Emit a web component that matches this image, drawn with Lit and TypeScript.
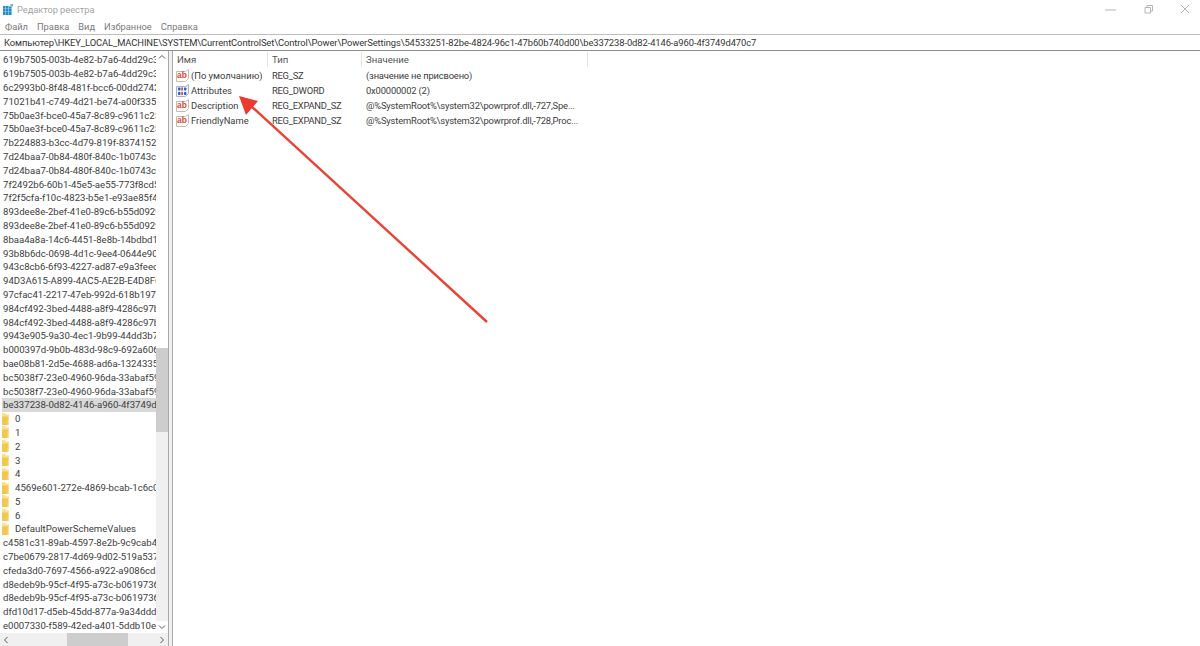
import { LitElement, html, css, svg } from "lit";
import { customElement } from "lit/decorators.js";

type Row = { t: string; folder?: boolean; sel?: boolean };
const keys: Row[] = [
  "619b7505-003b-4e82-b7a6-4dd29c300971","619b7505-003b-4e82-b7a6-4dd29c300972","6c2993b0-8f48-481f-bcc6-00dd27420000","71021b41-c749-4d21-be74-a00f335d582b",
  "75b0ae3f-bce0-45a7-8c89-c9611c25e100","75b0ae3f-bce0-45a7-8c89-c9611c25e101","7b224883-b3cc-4d79-819f-8374152cbe7c","7d24baa7-0b84-480f-840c-1b0743c00f5f",
  "7d24baa7-0b84-480f-840c-1b0743c00f60","7f2492b6-60b1-45e5-ae55-773f8cd5caec","7f2f5cfa-f10c-4823-b5e1-e93ae85f46b5","893dee8e-2bef-41e0-89c6-b55d0929964c",
  "893dee8e-2bef-41e0-89c6-b55d0929964d","8baa4a8a-14c6-4451-8e8b-14bdbd197537","93b8b6dc-0698-4d1c-9ee4-0644e900c85d","943c8cb6-6f93-4227-ad87-e9a3feec08d1",
  "94D3A615-A899-4AC5-AE2B-E4D8F634367F","97cfac41-2217-47eb-992d-618b1977c907","984cf492-3bed-4488-a8f9-4286c97bf5aa","984cf492-3bed-4488-a8f9-4286c97bf5ab",
  "9943e905-9a30-4ec1-9b99-44dd3b76f7a2","b000397d-9b0b-483d-98c9-692a6060cfbf","bae08b81-2d5e-4688-ad6a-13243356654b","bc5038f7-23e0-4960-96da-33abaf5935ec",
  "bc5038f7-23e0-4960-96da-33abaf5935ed",
].map((t) => ({ t }));
const rows: Row[] = [
  ...keys,
  { t: "be337238-0d82-4146-a960-4f3749d470c7", sel: true },
  ...["0","1","2","3","4","4569e601-272e-4869-bcab-1c6c03d7966f","5","6","DefaultPowerSchemeValues"].map((t) => ({ t, folder: true })),
  ...["c4581c31-89ab-4597-8e2b-9c9cab440e6b","c7be0679-2817-4d69-9d02-519a537ed0c6","cfeda3d0-7697-4566-a922-a9086cd49dfa","d8edeb9b-95cf-4f95-a73c-b061973693c8","d8edeb9b-95cf-4f95-a73c-b061973693c9","dfd10d17-d5eb-45dd-877a-9a34ddd15c82","e0007330-f589-42ed-a401-5ddb10e785d3"].map((t) => ({ t })),
];
const values = [
  { icon: "ab", name: "(По умолчанию)", type: "REG_SZ", value: "(значение не присвоено)" },
  { icon: "bin", name: "Attributes", type: "REG_DWORD", value: "0x00000002 (2)" },
  { icon: "ab", name: "Description", type: "REG_EXPAND_SZ", value: "@%SystemRoot%\\system32\\powrprof.dll,-727,Spe..." },
  { icon: "ab", name: "FriendlyName", type: "REG_EXPAND_SZ", value: "@%SystemRoot%\\system32\\powrprof.dll,-728,Proc..." },
];

const abIcon = html`<svg class="ic" viewBox="0 0 13 13"><path d="M.5 2.5h9l3-2v9l-3 3h-9z" fill="#fff" stroke="#c9b9b4"/><text x="6" y="9" text-anchor="middle" font-size="8.4" font-weight="700" fill="#dc4a32" font-family="Liberation Sans">ab</text></svg>`;
const binIcon = html`<svg class="ic" viewBox="0 0 13 13"><path d="M.5 2.5h9l3-2v9l-3 3h-9z" fill="#eef2fb" stroke="#a8b2cc"/><g fill="#2b5fc9"><rect x="2" y="3.5" width="2.4" height="3" rx=".8"/><rect x="8" y="3.5" width="2.4" height="3" rx=".8"/><rect x="2" y="8" width="2.4" height="3" rx=".8"/><rect x="8" y="8" width="2.4" height="3" rx=".8"/></g><g fill="#d2553f"><rect x="5.2" y="3.5" width="1.8" height="3"/><rect x="5.2" y="8" width="1.8" height="3"/></g></svg>`;
const folder = html`<svg class="fd" viewBox="0 0 7 12"><path d="M0 0h3l1 1.5h3V12H0z" fill="#fbe08a"/><path d="M0 3.5h6L5.5 12H0z" fill="#f3c650"/></svg>`;

@customElement("app-root")
export class AppRoot extends LitElement {
  static styles = css`
    :host { display: flex; flex-direction: column; width: 1200px; height: 646px; position: relative; overflow: hidden; background: #fff; font-family: Roboto, "Open Sans", sans-serif; font-size: 9.6px; color: #3c3c3c; }
    .title { height: 18px; display: flex; align-items: center; flex: none; padding-left: 3px; gap: 4px; color: #a3a3a3; font-size: 9.3px; letter-spacing: -0.05px; }
    .title .name { flex: 1; }
    .logo { width: 10px; height: 11px; }
    .ctl { display: flex; gap: 23px; padding-right: 7px; }
    .ctl svg { width: 14px; height: 14px; display: block; }
    .menu { height: 16px; display: flex; align-items: center; gap: 9px; flex: none; padding-left: 5px; color: #7a7a7a; font-size: 9.3px; }
    .addr { height: 15px; flex: none; display: flex; align-items: center; padding-left: 4px; border-top: 1px solid #bdbdbd; border-bottom: 1px solid #8e8e8e; color: #333; font-size: 9.4px; letter-spacing: -0.09px; white-space: nowrap; }
    .body { flex: 1; display: flex; min-height: 0; }
    .left { width: 168px; flex: none; display: flex; flex-direction: column; }
    .left-main { flex: 1; display: flex; min-height: 0; }
    .tree { width: 156px; padding: 2px 0 0 2px; overflow: hidden; flex: none; box-sizing: border-box; }
    .row { height: 13.8px; display: flex; align-items: center; white-space: nowrap; overflow: hidden; padding-left: 1px; }
    .row.sel { background: #d9d9d9; }
    .row.folder { padding-left: 0; gap: 6px; }
    .fd { width: 7px; height: 12px; flex: none; }
    .vbar { width: 12px; flex: none; background: #f0f0f0; display: flex; flex-direction: column; }
    .bar-btn { height: 12px; flex: none; background: #fff; display: flex; align-items: center; justify-content: center; }
    .bar-btn svg { width: 8px; height: 8px; }
    .vtrack { flex: 1; display: flex; flex-direction: column; }
    .vspace { height: 285px; flex: none; background: #fff; }
    .vthumb { height: 84px; flex: none; background: #cdcdcd; }
    .hbar { height: 13px; flex: none; display: flex; align-items: center; background: #f0f0f0; }
    .hbtn { width: 12px; height: 13px; display: flex; align-items: center; justify-content: center; flex: none; }
    .hbtn svg { width: 8px; height: 8px; }
    .hspace { width: 55px; flex: none; }
    .hthumb { width: 61px; height: 13px; background: #cdcdcd; flex: none; }
    .hfill { flex: 1; }
    .split { width: 5px; flex: none; background: #f0f0f0; border-left: 1px solid #a8a8a8; border-right: 1px solid #a8a8a8; box-sizing: border-box; }
    .right { flex: 1; min-width: 0; }
    .head { display: grid; grid-template-columns: 95px 94px 226px; height: 16px; align-items: end; color: #555; }
    .head div { height: 15px; padding-left: 4px; line-height: 15px; border-right: 1px solid #e5e5e5; }
    .vals { display: grid; grid-template-columns: 95px 94px 1fr; grid-auto-rows: 15px; padding-top: 1px; font-size: 9.4px; }
    .n { display: flex; align-items: center; gap: 2px; padding-left: 3px; white-space: nowrap; }
    .t, .v { display: flex; align-items: center; padding-left: 4px; white-space: nowrap; }
    .t { letter-spacing: -0.25px; }
    .v { letter-spacing: -0.17px; }
    .ic { width: 13px; height: 13px; flex: none; }
    .arrow { position: absolute; left: 0; top: 0; width: 1200px; height: 646px; pointer-events: none; }
  `;
  render() {
    const up = svg`<path d="M1 5.5l3-3 3 3" fill="none" stroke="#555" stroke-width="1"/>`;
    const down = svg`<path d="M1 2.5l3 3 3-3" fill="none" stroke="#555" stroke-width="1"/>`;
    const l = svg`<path d="M5.5 1l-3 3 3 3" fill="none" stroke="#555" stroke-width="1"/>`;
    const r = svg`<path d="M2.5 1l3 3-3 3" fill="none" stroke="#555" stroke-width="1"/>`;
    return html`
      <div class="title">
        <svg class="logo" viewBox="0 0 10 11"><path d="M0 2h2.6v2.7H0zM3 2h2.6v2.7H3zM6 2.5h2.6v2.2H6zM0 5h2.6v2.7H0zM3 5h2.6v2.7H3zM6 5h2.6v2.7H6zM0 8h2.6v3H0zM3 8h2.6v3H3zM6 8h2.6v3H6z" fill="#1f8fc9"/><path d="M7.4 0H10v2.6H7.4z" fill="#6cb8e0"/></svg>
        <span class="name">Редактор реестра</span>
        <div class="ctl">
          <svg viewBox="0 0 14 14"><path d="M0 8h11" stroke="#b5b5b5"/></svg>
          <svg viewBox="0 0 14 14"><path d="M3 5.5h5.5V11H3zM5 5.5V3.5h5.5V9H8.5" fill="none" stroke="#b5b5b5"/></svg>
          <svg viewBox="0 0 14 14"><path d="M2 3l8 8M10 3l-8 8" stroke="#b5b5b5"/></svg>
        </div>
      </div>
      <div class="menu"><span>Файл</span><span>Правка</span><span>Вид</span><span>Избранное</span><span>Справка</span></div>
      <div class="addr">Компьютер\\HKEY_LOCAL_MACHINE\\SYSTEM\\CurrentControlSet\\Control\\Power\\PowerSettings\\54533251-82be-4824-96c1-47b60b740d00\\be337238-0d82-4146-a960-4f3749d470c7</div>
      <div class="body">
        <div class="left">
          <div class="left-main">
            <div class="tree">
              ${rows.map((x) => html`<div class="row ${x.sel ? "sel" : ""} ${x.folder ? "folder" : ""}">${x.folder ? folder : ""}<span>${x.t}</span></div>`)}
            </div>
            <div class="vbar">
              <div class="bar-btn"><svg viewBox="0 0 8 8">${up}</svg></div>
              <div class="vtrack"><div class="vspace"></div><div class="vthumb"></div></div>
              <div class="bar-btn"><svg viewBox="0 0 8 8">${down}</svg></div>
            </div>
          </div>
          <div class="hbar">
            <div class="hbtn"><svg viewBox="0 0 8 8">${l}</svg></div>
            <div class="hspace"></div><div class="hthumb"></div><div class="hfill"></div>
            <div class="hbtn"><svg viewBox="0 0 8 8">${r}</svg></div>
          </div>
        </div>
        <div class="split"></div>
        <div class="right">
          <div class="head"><div>Имя</div><div>Тип</div><div>Значение</div></div>
          <div class="vals">
            ${values.map((v) => html`<div class="n">${v.icon === "ab" ? abIcon : binIcon}<span>${v.name}</span></div><div class="t">${v.type}</div><div class="v">${v.value}</div>`)}
          </div>
        </div>
      </div>
      <svg class="arrow" viewBox="0 0 1200 646">
        <path d="M487 322L251 106" stroke="#ea4335" stroke-width="2.4" fill="none"/>
        <path d="M239 96L258 101L246 115Z" fill="#ea3b2e"/>
      </svg>
    `;
  }
}
